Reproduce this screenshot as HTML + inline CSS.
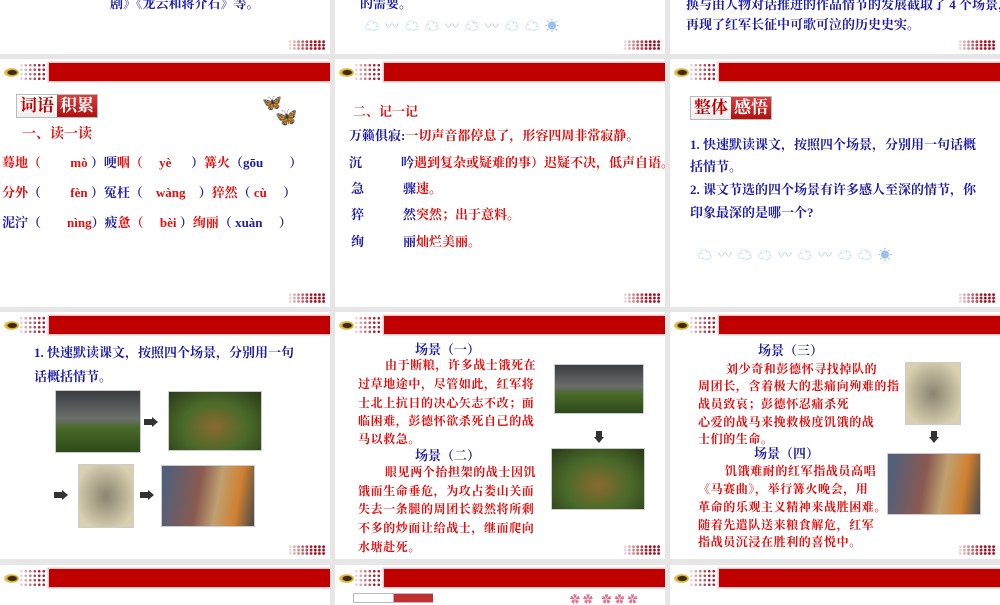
<!DOCTYPE html>
<html><head><meta charset="utf-8"><style>
*{margin:0;padding:0;box-sizing:border-box}
body{width:1000px;height:600px;background:#e6e6e6;position:relative;overflow:hidden;font-family:"Liberation Serif","Noto Serif CJK SC",serif;font-weight:bold}
.s{position:absolute;background:#fff;width:330px;overflow:hidden}
.a{position:absolute;white-space:nowrap}
.bar{position:absolute;left:49px;top:4px;right:0;height:18px;background:#c00000;box-shadow:0 0 0 1.5px #f4c4c4}
.ico{position:absolute;left:4px;top:9px;width:15px;height:9px;border-radius:50%;background:radial-gradient(ellipse at 55% 50%,#3a2a10 0 35%,#d8b030 45%,#f0d878 80%)}
.dg{position:absolute;left:19px;top:4px;width:28px;height:18px;background:radial-gradient(circle,#b02030 1.2px,transparent 1.5px) 0 0/4.5px 4.5px}
.dg:after{content:"";position:absolute;inset:0;background:linear-gradient(90deg,rgba(255,255,255,.9),rgba(255,255,255,0) 70%)}
.bd{position:absolute;right:4px;bottom:4px;width:38px;height:10px;background:radial-gradient(circle,#9a1020 1.3px,transparent 1.6px) 0 0/4.2px 3.4px}
.bd:after{content:"";position:absolute;inset:0;background:linear-gradient(90deg,rgba(255,255,255,.9),rgba(255,255,255,0) 65%)}
.b{color:#1c1ca8}.r{color:#e01010}
.t13{font-size:13px}.t12{font-size:12px;letter-spacing:.6px}
.tag{position:absolute;height:24px;border:1px solid #bbb;display:flex;font-size:17px}
.tag span{padding:0 3px;line-height:22px}
.tag .w{color:#c00000;background:linear-gradient(#fff,#eee)}
.tag .k{color:#fff;background:linear-gradient(#d84040,#b01010)}
.img{position:absolute;border:1px solid #ccc}
.arr{position:absolute;width:14px;height:10px}
.arr:before{content:"";position:absolute;left:0;top:2px;width:8px;height:6px;background:#333}
.arr:after{content:"";position:absolute;left:8px;top:0;border-left:6px solid #333;border-top:5px solid transparent;border-bottom:5px solid transparent}
.arrd{position:absolute;width:10px;height:12px}
.arrd:before{content:"";position:absolute;left:2px;top:0;width:6px;height:6px;background:#333}
.arrd:after{content:"";position:absolute;left:0;top:6px;border-top:6px solid #333;border-left:5px solid transparent;border-right:5px solid transparent}
.cl{position:absolute;font-size:14px;color:#9cc0ee;letter-spacing:6px;font-weight:normal}
</style></head><body>

<!-- row 1 -->
<div class="s" style="left:0;top:0;height:54px">
<div class="a b t13" style="left:110px;top:-7px">剧》《龙云和蒋介石》等。</div><div class="bd"></div></div>
<div class="s" style="left:335px;top:0;height:54px">
<div class="a b t13" style="left:25px;top:-7px">的需要。</div>
<div class="cl" style="left:30px;top:16px">☁〰☁☁〰☁〰☁☁☀</div><div class="bd"></div></div>
<div class="s" style="left:670px;top:0;height:54px">
<div class="a b t13" style="left:16px;top:-6px">换与由人物对话推进的作品情节的发展截取了 4 个场景，</div>
<div class="a b t13" style="left:16px;top:14px">再现了红军长征中可歌可泣的历史史实。</div><div class="bd"></div></div>

<!-- row 2 -->
<div class="s" style="left:0;top:59px;height:248px">
<div class="ico"></div><div class="dg"></div><div class="bar"></div>
<div class="tag" style="left:16px;top:35px"><span class="w">词语</span><span class="k">积累</span></div>
<div class="a" style="left:262px;top:34px;font-size:16px;color:#a05a10">🦋</div>
<div class="a" style="left:275px;top:48px;font-size:18px;color:#a05a10">🦋</div>
<div class="a r" style="left:22px;top:64px;font-size:14px">一、读一读</div>
<div class="a t13" style="left:2px;top:93px"><span class="r">蓦地（</span>　　 <span class="r">mò</span> <span class="b">）哽</span><span class="r">咽（</span>　 <span class="r">yè</span> 　 <span class="b">）</span><span class="r">篝火</span><span class="b">（gōu　　）</span></div>
<div class="a t13" style="left:2px;top:123px"><span class="r">分外</span><span class="b">（</span>　　 <span class="r">fèn</span> <span class="b">）冤枉（</span>　<span class="r">wàng</span>　<span class="b">）</span><span class="r">猝然</span><span class="b">（</span> <span class="r">cù</span> 　<span class="b">）</span></div>
<div class="a t13" style="left:2px;top:153px"><span class="b">泥泞（</span>　　<span class="r">nìng</span><span class="b">）疲</span><span class="r">惫（</span>　 <span class="r">bèi</span> <span class="b">）</span><span class="r">绚丽</span><span class="b">（ xuàn　 ）</span></div>
<div class="bd"></div></div>

<div class="s" style="left:335px;top:59px;height:248px">
<div class="ico"></div><div class="dg"></div><div class="bar"></div>
<div class="a r" style="left:18px;top:42px;font-size:13px">二、记一记</div>
<div class="a t13" style="left:14px;top:66px"><span class="b">万籁俱寂:</span><span class="r">一切声音都停息了，形容四周非常寂静。</span></div>
<div class="a t13" style="left:14px;top:93px"><span class="b">沉</span>　　　<span class="b">吟</span><span class="r">遇到复杂或疑难的事）迟疑不决，低声自语。</span></div>
<div class="a t13" style="left:16px;top:119px"><span class="b">急</span>　　　<span class="b">骤</span><span class="r">速。</span></div>
<div class="a t13" style="left:16px;top:145px"><span class="b">猝</span>　　　<span class="b">然</span><span class="r">突然；出于意料。</span></div>
<div class="a t13" style="left:16px;top:172px"><span class="b">绚</span>　　　<span class="b">丽</span><span class="r">灿烂美丽。</span></div>
<div class="bd"></div></div>

<div class="s" style="left:670px;top:59px;height:248px">
<div class="ico"></div><div class="dg"></div><div class="bar"></div>
<div class="tag" style="left:20px;top:37px"><span class="w">整体</span><span class="k">感悟</span></div>
<div class="a b t13" style="left:20px;top:75px">1. 快速默读课文，按照四个场景，分别用一句话概</div>
<div class="a b t13" style="left:20px;top:97px">括情节。</div>
<div class="a b t13" style="left:20px;top:120px">2. 课文节选的四个场景有许多感人至深的情节，你</div>
<div class="a b t13" style="left:20px;top:143px">印象最深的是哪一个?</div>
<div class="cl" style="left:28px;top:186px">☁〰☁☁〰☁〰☁☁☀</div>
<div class="bd"></div></div>

<!-- row 3 -->
<div class="s" style="left:0;top:312px;height:247px">
<div class="ico"></div><div class="dg"></div><div class="bar"></div>
<div class="a b t13" style="left:34px;top:30px">1. 快速默读课文，按照四个场景，分别用一句</div>
<div class="a b t13" style="left:34px;top:54px">话概括情节。</div>
<div class="img" style="left:55px;top:78px;width:86px;height:63px;background:linear-gradient(#3a3e44,#6a6e6a 45%,#4a6a2a 60%,#2e4a1a)"></div>
<div class="arr" style="left:144px;top:105px"></div>
<div class="img" style="left:168px;top:79px;width:94px;height:60px;background:radial-gradient(ellipse at 50% 60%,#8a6a30,#4a6a2a 50%,#2a3a18)"></div>
<div class="arr" style="left:54px;top:178px"></div>
<div class="img" style="left:78px;top:152px;width:56px;height:64px;background:radial-gradient(#8a8470,#d8d0b0 80%)"></div>
<div class="arr" style="left:140px;top:178px"></div>
<div class="img" style="left:161px;top:153px;width:94px;height:62px;background:linear-gradient(100deg,#4a6080,#8a5a50 40%,#c0a070 60%,#d08030 80%,#4a4a4a)"></div>
<div class="bd"></div></div>

<div class="s" style="left:335px;top:312px;height:247px">
<div class="ico"></div><div class="dg"></div><div class="bar"></div>
<div class="a b t13" style="left:80px;top:27px">场景（一）</div>
<div class="a r t12" style="left:50px;top:44px">由于断粮，许多战士饿死在</div>
<div class="a r t12" style="left:23px;top:63px">过草地途中，尽管如此，红军将</div>
<div class="a r t12" style="left:23px;top:82px">士北上抗日的决心矢志不改；面</div>
<div class="a r t12" style="left:23px;top:100px">临困难，彭德怀欲杀死自己的战</div>
<div class="a r t12" style="left:23px;top:118px">马以救急。</div>
<div class="a b t13" style="left:80px;top:133px">场景（二）</div>
<div class="a r t12" style="left:50px;top:151px">眼见两个抬担架的战士因饥</div>
<div class="a r t12" style="left:23px;top:170px">饿而生命垂危，为攻占娄山关而</div>
<div class="a r t12" style="left:23px;top:188px">失去一条腿的周团长毅然将所剩</div>
<div class="a r t12" style="left:23px;top:207px">不多的炒面让给战士，继而爬向</div>
<div class="a r t12" style="left:23px;top:226px">水塘赴死。</div>
<div class="img" style="left:219px;top:52px;width:90px;height:50px;background:linear-gradient(#3a3e44,#6a6e6a 45%,#4a6a2a 60%,#2e4a1a)"></div>
<div class="arrd" style="left:259px;top:119px"></div>
<div class="img" style="left:216px;top:136px;width:94px;height:62px;background:radial-gradient(ellipse at 50% 60%,#8a6a30,#4a6a2a 50%,#2a3a18)"></div>
<div class="bd"></div></div>

<div class="s" style="left:670px;top:312px;height:247px">
<div class="ico"></div><div class="dg"></div><div class="bar"></div>
<div class="a b t13" style="left:88px;top:28px">场景（三）</div>
<div class="a r t12" style="left:56px;top:48px">刘少奇和彭德怀寻找掉队的</div>
<div class="a r t12" style="left:28px;top:65px">周团长，含着极大的悲痛向殉难的指</div>
<div class="a r t12" style="left:28px;top:83px">战员致哀；彭德怀忍痛杀死</div>
<div class="a r t12" style="left:28px;top:101px">心爱的战马来挽救极度饥饿的战</div>
<div class="a r t12" style="left:28px;top:118px">士们的生命。</div>
<div class="a b t13" style="left:84px;top:131px">场景（四）</div>
<div class="a r t12" style="left:55px;top:150px">饥饿难耐的红军指战员高唱</div>
<div class="a r t12" style="left:28px;top:168px">《马赛曲》，举行篝火晚会，用</div>
<div class="a r t12" style="left:28px;top:186px">革命的乐观主义精神来战胜困难。</div>
<div class="a r t12" style="left:28px;top:204px">随着先遣队送来粮食解危，红军</div>
<div class="a r t12" style="left:28px;top:221px">指战员沉浸在胜利的喜悦中。</div>
<div class="img" style="left:235px;top:50px;width:56px;height:63px;background:radial-gradient(#8a8470,#d8d0b0 80%)"></div>
<div class="arrd" style="left:259px;top:119px"></div>
<div class="img" style="left:217px;top:141px;width:94px;height:62px;background:linear-gradient(100deg,#4a6080,#8a5a50 40%,#c0a070 60%,#d08030 80%,#4a4a4a)"></div>
<div class="bd"></div></div>

<!-- row 4 -->
<div class="s" style="left:0;top:565px;height:40px"><div class="ico"></div><div class="dg"></div><div class="bar"></div></div>
<div class="s" style="left:335px;top:565px;height:40px"><div class="ico"></div><div class="dg"></div><div class="bar"></div>
<div class="a" style="left:18px;top:28px;width:80px;height:10px;border:1px solid #bbb;border-right:0;background:linear-gradient(90deg,#fff 50%,#c03030 50%)"></div>
<div class="a" style="left:235px;top:26px;font-size:10px;color:#e07090;letter-spacing:3px">✿✿ ✿✿✿</div></div>
<div class="s" style="left:670px;top:565px;height:40px"><div class="ico"></div><div class="dg"></div><div class="bar"></div></div>
</body></html>
